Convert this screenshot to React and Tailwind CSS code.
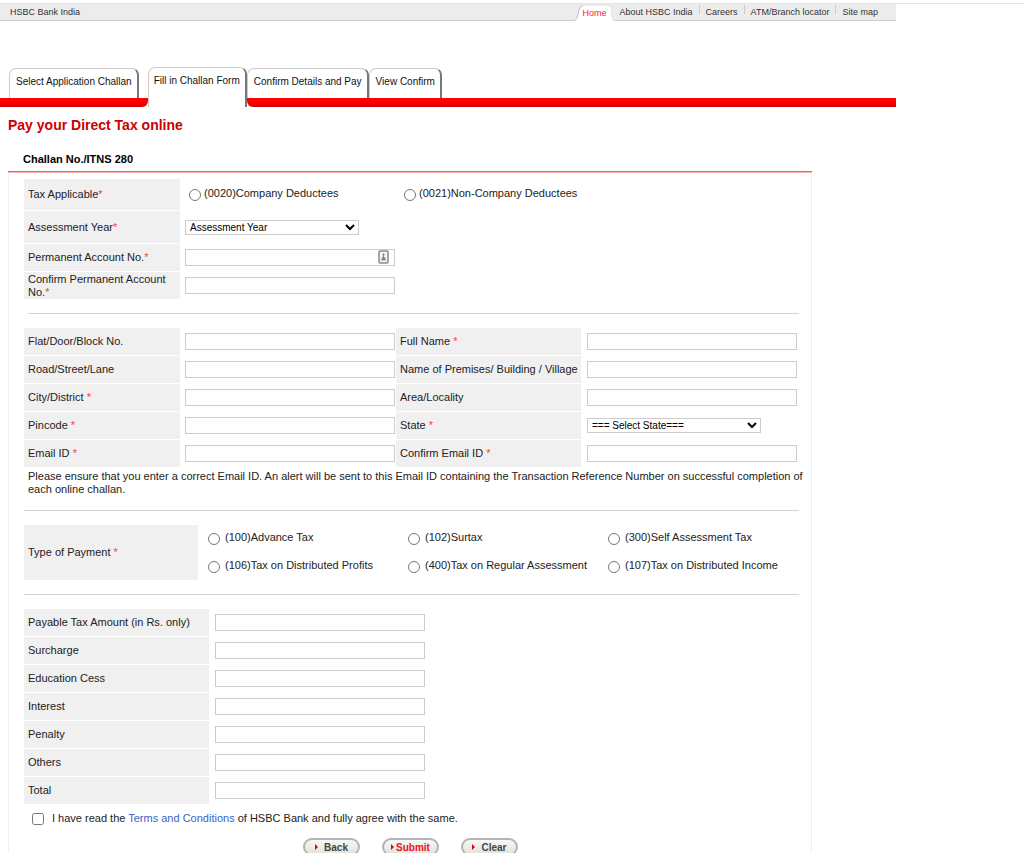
import React from "react";

const Star = () => <span className="text-[#ff3b3b]">*</span>;

const labelCell = "flex items-center bg-[#f0f0f0] pl-1 pr-1";
const box = "block h-[17px] w-[210px] border border-[#ccc] bg-white px-1 text-[11px] outline-none focus:border-gray-500";
const selectBox = "block h-[15px] w-[174px] border border-[#ccc] bg-white text-[10px] leading-3 text-black";

function Label({ htmlFor, text, required, spaced = true, className = "" }) {
  return (
    <label htmlFor={htmlFor} className={`${labelCell} ${className}`}>
      <span>
        {text}
        {required && spaced ? " " : ""}
        {required && <Star />}
      </span>
    </label>
  );
}

function Radio({ id, name, label, gap }) {
  return (
    <div className={`flex items-start ${gap}`}>
      <input id={id} name={name} type="radio" className="mt-[3px] size-3 shrink-0" />
      <label htmlFor={id} className="pt-px">{label}</label>
    </div>
  );
}

function HomeEdge({ flip }) {
  return (
    <svg viewBox="0 0 9 17" className={flip ? "h-[17px] w-[5px]" : "h-[17px] w-[9px]"} preserveAspectRatio="none" aria-hidden="true">
      {flip ? (
        <>
          <path d="M0 1.500 C4 1.500 4 4 5 9 C5.500 14 7 16.500 9 16.500 L9 17 L0 17 Z" fill="#fff" />
          <path d="M0 1.500 C4 1.500 4 4 5 9 C5.500 14 7 16.500 9 16.500" fill="none" stroke="#d8d8d8" />
        </>
      ) : (
        <>
          <path d="M0 16.500 C5 16.500 3.500 1.500 9 1.500 L9 17 L0 17 Z" fill="#fff" />
          <path d="M0 16.500 C5 16.500 3.500 1.500 9 1.500" fill="none" stroke="#bdbdbd" />
        </>
      )}
    </svg>
  );
}

function TopBar() {
  const links = ["About HSBC India", "Careers", "ATM/Branch locator", "Site map"];
  return (
    <header className="mt-[3px] border-t border-[#e4e4ec]">
      <div className="flex h-[17px] max-w-[896px] text-[9px] leading-[16px] text-[#333]">
        <div className="flex-1 border-b border-[#ccc] bg-[#ececec] pl-[10px]">HSBC Bank India</div>
        <nav className="flex">
          <div className="flex bg-[#ececec]">
            <HomeEdge />
            <a href="#home" className="border-t-2 border-[#ececec] bg-white pr-[2px] leading-[14px] text-[#ff1a1a]">Home</a>
            <HomeEdge flip />
          </div>
          <div className="flex border-b border-[#ccc] bg-[#ececec] pr-3">
            {links.map((l, i) => (
              <React.Fragment key={l}>
                {i > 0 && <span className="mt-px h-[9px] w-px bg-[#ccc]" />}
                <a href="#nav" className="px-[6px]">{l}</a>
              </React.Fragment>
            ))}
          </div>
        </nav>
      </div>
    </header>
  );
}

const tabEdge = "rounded-t-[7px] border-t border-l border-r-2 border-t-[#ccc] border-l-[#ccc] border-r-[#777] bg-white whitespace-nowrap";
const redBar = "h-[9px] bg-linear-to-b from-[#ff0000] from-40% to-[#d00000]";

function Tab({ children }) {
  return (
    <button type="button" className={`${tabEdge} h-[30px] pr-[5px] pb-1 pl-[6px]`}>
      {children}
    </button>
  );
}

function Tabs() {
  return (
    <nav className="mt-[46px] flex max-w-[896px] items-end text-[10px] leading-3 text-[#111]">
      <div>
        <div className="flex pr-[9px] pl-[9px]">
          <Tab>Select Application Challan</Tab>
        </div>
        <div className={`${redBar} rounded-br-[6px]`} />
      </div>
      <button type="button" aria-current="step" className={`${tabEdge} flex h-[40px] items-start px-[5px] pt-[7px]`}>
        Fill in Challan Form
      </button>
      <div className="flex-1">
        <div className="flex">
          <Tab>Confirm Details and Pay</Tab>
          <Tab>View Confirm</Tab>
        </div>
        <div className={`${redBar} rounded-bl-[6px]`} />
      </div>
    </nav>
  );
}

const addressRows = [
  ["Flat/Door/Block No.", false, "Full Name", true],
  ["Road/Street/Lane", false, "Name of Premises/ Building / Village", false],
  ["City/District", true, "Area/Locality", false],
  ["Pincode", true, "State", true],
  ["Email ID", true, "Confirm Email ID", true],
];

const payments = [
  "(100)Advance Tax",
  "(102)Surtax",
  "(300)Self Assessment Tax",
  "(106)Tax on Distributed Profits",
  "(400)Tax on Regular Assessment",
  "(107)Tax on Distributed Income",
];

const amounts = ["Payable Tax Amount (in Rs. only)", "Surcharge", "Education Cess", "Interest", "Penalty", "Others", "Total"];

function PillButton({ type, red, children }) {
  return (
    <button
      type={type}
      className={`flex h-[18px] w-[57px] items-center justify-center rounded-[9px] border-2 border-[#b4b4b4] bg-linear-to-b from-[#f8f8f6] to-[#e2e2dc] text-[10px] font-bold ${red ? "gap-[2px] text-[#f0101a]" : "gap-[6px] text-[#444]"}`}
    >
      <svg viewBox="0 0 3 6" className="h-[6px] w-[3px]" aria-hidden="true">
        <path d="M0 0 L3 3 L0 6 Z" fill="#e0001b" />
      </svg>
      {children}
    </button>
  );
}

function ChallanForm() {
  return (
    <form className="mr-2 ml-2 max-w-[804px] border-x border-[#efefef]" onSubmit={(e) => e.preventDefault()}>
      <div className="-mx-px h-[2px] border-t border-[#f85a5a] bg-[#ffb4b4]" />
      <div className="pt-[6px] pr-[12px] pl-[15px]">
        <div className="grid grid-cols-[156px_1fr] grid-rows-[31px_32px_27px_27px] gap-x-[5px] gap-y-px">
          <div id="applicable" className={labelCell}><span>Tax Applicable<Star /></span></div>
          <div role="radiogroup" aria-labelledby="applicable" className="grid grid-cols-[215px_1fr] pt-[7px] pl-1">
            <Radio id="company" name="applicable" label="(0020)Company Deductees" gap="gap-[3px]" />
            <Radio id="noncompany" name="applicable" label="(0021)Non-Company Deductees" gap="gap-[3px]" />
          </div>
          <Label htmlFor="year" text="Assessment Year" required spaced={false} />
          <div className="flex items-center">
            <select id="year" className={selectBox}><option>Assessment Year</option></select>
          </div>
          <Label htmlFor="pan" text="Permanent Account No." required spaced={false} />
          <div className="flex items-center">
            <div className="relative">
              <input id="pan" type="text" className={box} />
              <svg viewBox="0 0 11 14" className="absolute top-px right-[6px] h-[14px] w-[11px]" aria-hidden="true">
                <rect x="1" y="1" width="9" height="12" rx="1" fill="#f4f4f4" stroke="#8a8a8a" strokeWidth="1.500" />
                <circle cx="5.500" cy="4.500" r="1" fill="#777" />
                <path d="M5.500 5 V8" stroke="#888" />
                <path d="M3.500 10.500 V8.500 L4.500 7 H6.500 L7.500 8.500 V10.500 Z" fill="#888" />
              </svg>
            </div>
          </div>
          <Label htmlFor="pan2" text="Confirm Permanent Account No." required spaced={false} />
          <div className="flex items-center"><input id="pan2" type="text" className={box} /></div>
        </div>

        <hr className="mt-[14px] ml-1 border-[#d4d4d4]" />

        <div className="mt-[14px] grid auto-rows-[27px] grid-cols-[156px_216px_185px_1fr] gap-y-px">
          {addressRows.map(([a, ra, b, rb], i) => (
            <React.Fragment key={a}>
              <Label htmlFor={`left${i}`} text={a} required={ra} />
              <div className="flex items-center pl-[5px]"><input id={`left${i}`} type="text" className={box} /></div>
              <Label htmlFor={`right${i}`} text={b} required={rb} className="whitespace-nowrap" />
              <div className="flex items-center pl-[6px]">
                {b === "State" ? (
                  <select id={`right${i}`} className={selectBox}><option>=== Select State===</option></select>
                ) : (
                  <input id={`right${i}`} type="text" className={box} />
                )}
              </div>
            </React.Fragment>
          ))}
        </div>

        <p className="mt-[3px] -mr-[10px] pl-1">
          Please ensure that you enter a correct Email ID. An alert will be sent to this Email ID containing the Transaction
          Reference Number on successful completion of each online challan.
        </p>

        <hr className="mt-[14px] border-[#d4d4d4]" />

        <div className="mt-[14px] grid grid-cols-[174px_1fr]">
          <div id="payment" className={labelCell}><span>Type of Payment <Star /></span></div>
          <div role="radiogroup" aria-labelledby="payment" className="grid auto-rows-[27px] grid-cols-[200px_200px_1fr] gap-y-px pl-[10px]">
            {payments.map((p, i) => (
              <div key={p} className="pt-[5px]">
                <Radio id={`pay${i}`} name="payment" label={p} gap="gap-[5px]" />
              </div>
            ))}
          </div>
        </div>

        <hr className="mt-[14px] border-[#d4d4d4]" />

        <div className="mt-[14px] grid auto-rows-[27px] grid-cols-[185px_1fr] gap-x-[6px] gap-y-px">
          {amounts.map((a, i) => (
            <React.Fragment key={a}>
              <Label htmlFor={`amount${i}`} text={a} />
              <div className="flex items-center"><input id={`amount${i}`} type="text" className={box} /></div>
            </React.Fragment>
          ))}
        </div>

        <div className="mt-2 flex items-center gap-2 pl-2">
          <input id="agree" type="checkbox" className="size-3" />
          <label htmlFor="agree">
            I have read the <a href="#terms" className="text-[#3c5fc8]">Terms and Conditions</a> of HSBC Bank and fully agree with the same.
          </label>
        </div>

        <div className="mt-[13px] flex gap-[22px] pl-[279px]">
          <PillButton type="button">Back</PillButton>
          <PillButton type="submit" red>Submit</PillButton>
          <PillButton type="reset">Clear</PillButton>
        </div>
      </div>
    </form>
  );
}

export default function App() {
  return (
    <div className="flow-root bg-white font-['Liberation_Sans',Arial,sans-serif] text-[11px] leading-[13px] text-[#222]">
      <TopBar />
      <Tabs />
      <main>
        <h1 className="mt-[9px] pl-2 text-[14px] leading-[18px] font-bold text-[#cc0000]">Pay your Direct Tax online</h1>
        <h2 className="mt-[19px] mb-[5px] pl-[23px] font-bold text-black">Challan No./ITNS 280</h2>
        <ChallanForm />
      </main>
    </div>
  );
}
